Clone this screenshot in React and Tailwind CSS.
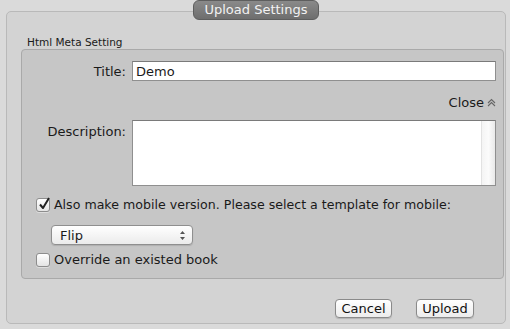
/* Upload Settings dialog */

function Checkbox({ checked }) {
  return (
    <div className="w-[14px] h-[14px] rounded-[3px] border border-[#8d8d8d] bg-gradient-to-b from-white to-[#e4e4e4] shadow-[0_1px_0_rgba(255,255,255,0.4)] relative shrink-0">
      {checked && (
        <svg className="absolute -top-[3px] left-[1px]" width="13" height="15" viewBox="0 0 13 15">
          <path d="M2 8.5 L5 12 L11 2" fill="none" stroke="#222" strokeWidth="2" strokeLinejoin="round" />
        </svg>
      )}
    </div>
  );
}

function Button({ children, width }) {
  return (
    <div
      className={`${width} h-[19px] rounded-[4px] border border-[#8a8a8a] bg-gradient-to-b from-white to-[#ececec] flex items-center justify-center text-[13px] text-[#111] shadow-[0_1px_1px_rgba(0,0,0,0.15)]`}
    >
      {children}
    </div>
  );
}

export default function App() {
  return (
    <div className="w-[510px] h-[329px] bg-[#dadada] relative overflow-hidden font-['DejaVu_Sans',sans-serif] text-[#1a1a1a]">
      {/* ── Tab title ── */}
      <div className="absolute left-[193px] top-0 w-[126px] h-[20px] rounded-[6px] border border-[#5e5e5e] bg-gradient-to-b from-[#8a8a8a] to-[#6e6e6e] flex items-center justify-center text-[13px] text-[#f2f2f2] z-10">
        Upload Settings
      </div>

      {/* ── Outer box ── */}
      <div className="ml-[6px] mt-[11px] w-[500px] h-[313px] rounded-[5px] border border-[#b9b9b9] bg-[#d3d3d3] flex flex-col">
        <div className="ml-[20px] mt-[24px] h-[13px] text-[10.5px] leading-[13px]">Html Meta Setting</div>

        {/* ── Inner group ── */}
        <div className="ml-[14px] w-[483px] h-[230px] rounded-[4px] border border-[#a9a9a9] bg-[#c6c6c6] flex flex-col text-[13px] leading-[19px]">
          <div className="flex items-center mt-[11px] h-[20px]">
            <div className="w-[104px] text-right">Title:</div>
            <div className="ml-[6px] w-[364px] h-[20px] bg-white border border-[#8f8f8f] border-t-[#7a7a7a] flex items-center px-[3px]">
              Demo
            </div>
          </div>

          <div className="flex justify-end items-center mt-[13px] h-[16px] pr-[7px]">
            Close
            <svg className="ml-[3px]" width="9" height="9" viewBox="0 0 9 9">
              <path d="M1 5 L4.5 1.5 L8 5 M1 8 L4.5 4.5 L8 8" fill="none" stroke="#666" strokeWidth="1.1" />
            </svg>
          </div>

          <div className="flex mt-[10px]">
            <div className="w-[104px] text-right mt-[2px]">Description:</div>
            <div className="ml-[6px] w-[364px] h-[66px] bg-white border border-[#8f8f8f] border-t-[#7a7a7a] flex justify-end">
              <div className="w-[14px] h-full bg-gradient-to-r from-[#f4f4f4] via-[#fbfbfb] to-[#e9e9e9] border-l border-[#e2e2e2]" />
            </div>
          </div>

          <div className="flex items-center mt-[9px] ml-[14px] gap-[4px]">
            <Checkbox checked />
            <span className="text-[12.6px]">Also make mobile version. Please select a template for mobile:</span>
          </div>

          <div className="ml-[29px] mt-[11px] w-[142px] h-[20px] rounded-[4px] border border-[#8f8f8f] bg-gradient-to-b from-white to-[#ebebeb] flex items-center justify-between pl-[8px] pr-[6px] shadow-[0_1px_1px_rgba(0,0,0,0.12)]">
            Flip
            <svg width="7" height="11" viewBox="0 0 7 11">
              <path d="M1 4 L3.5 1 L6 4 Z M1 7 L3.5 10 L6 7 Z" fill="#555" />
            </svg>
          </div>

          <div className="flex items-center mt-[5px] ml-[14px] gap-[4px]">
            <Checkbox />
            <span>Override an existed book</span>
          </div>
        </div>

        {/* ── Footer buttons ── */}
        <div className="flex justify-end gap-[24px] mt-[20px] pr-[31px]">
          <Button width="w-[57px]">Cancel</Button>
          <Button width="w-[58px]">Upload</Button>
        </div>
      </div>
    </div>
  );
}
